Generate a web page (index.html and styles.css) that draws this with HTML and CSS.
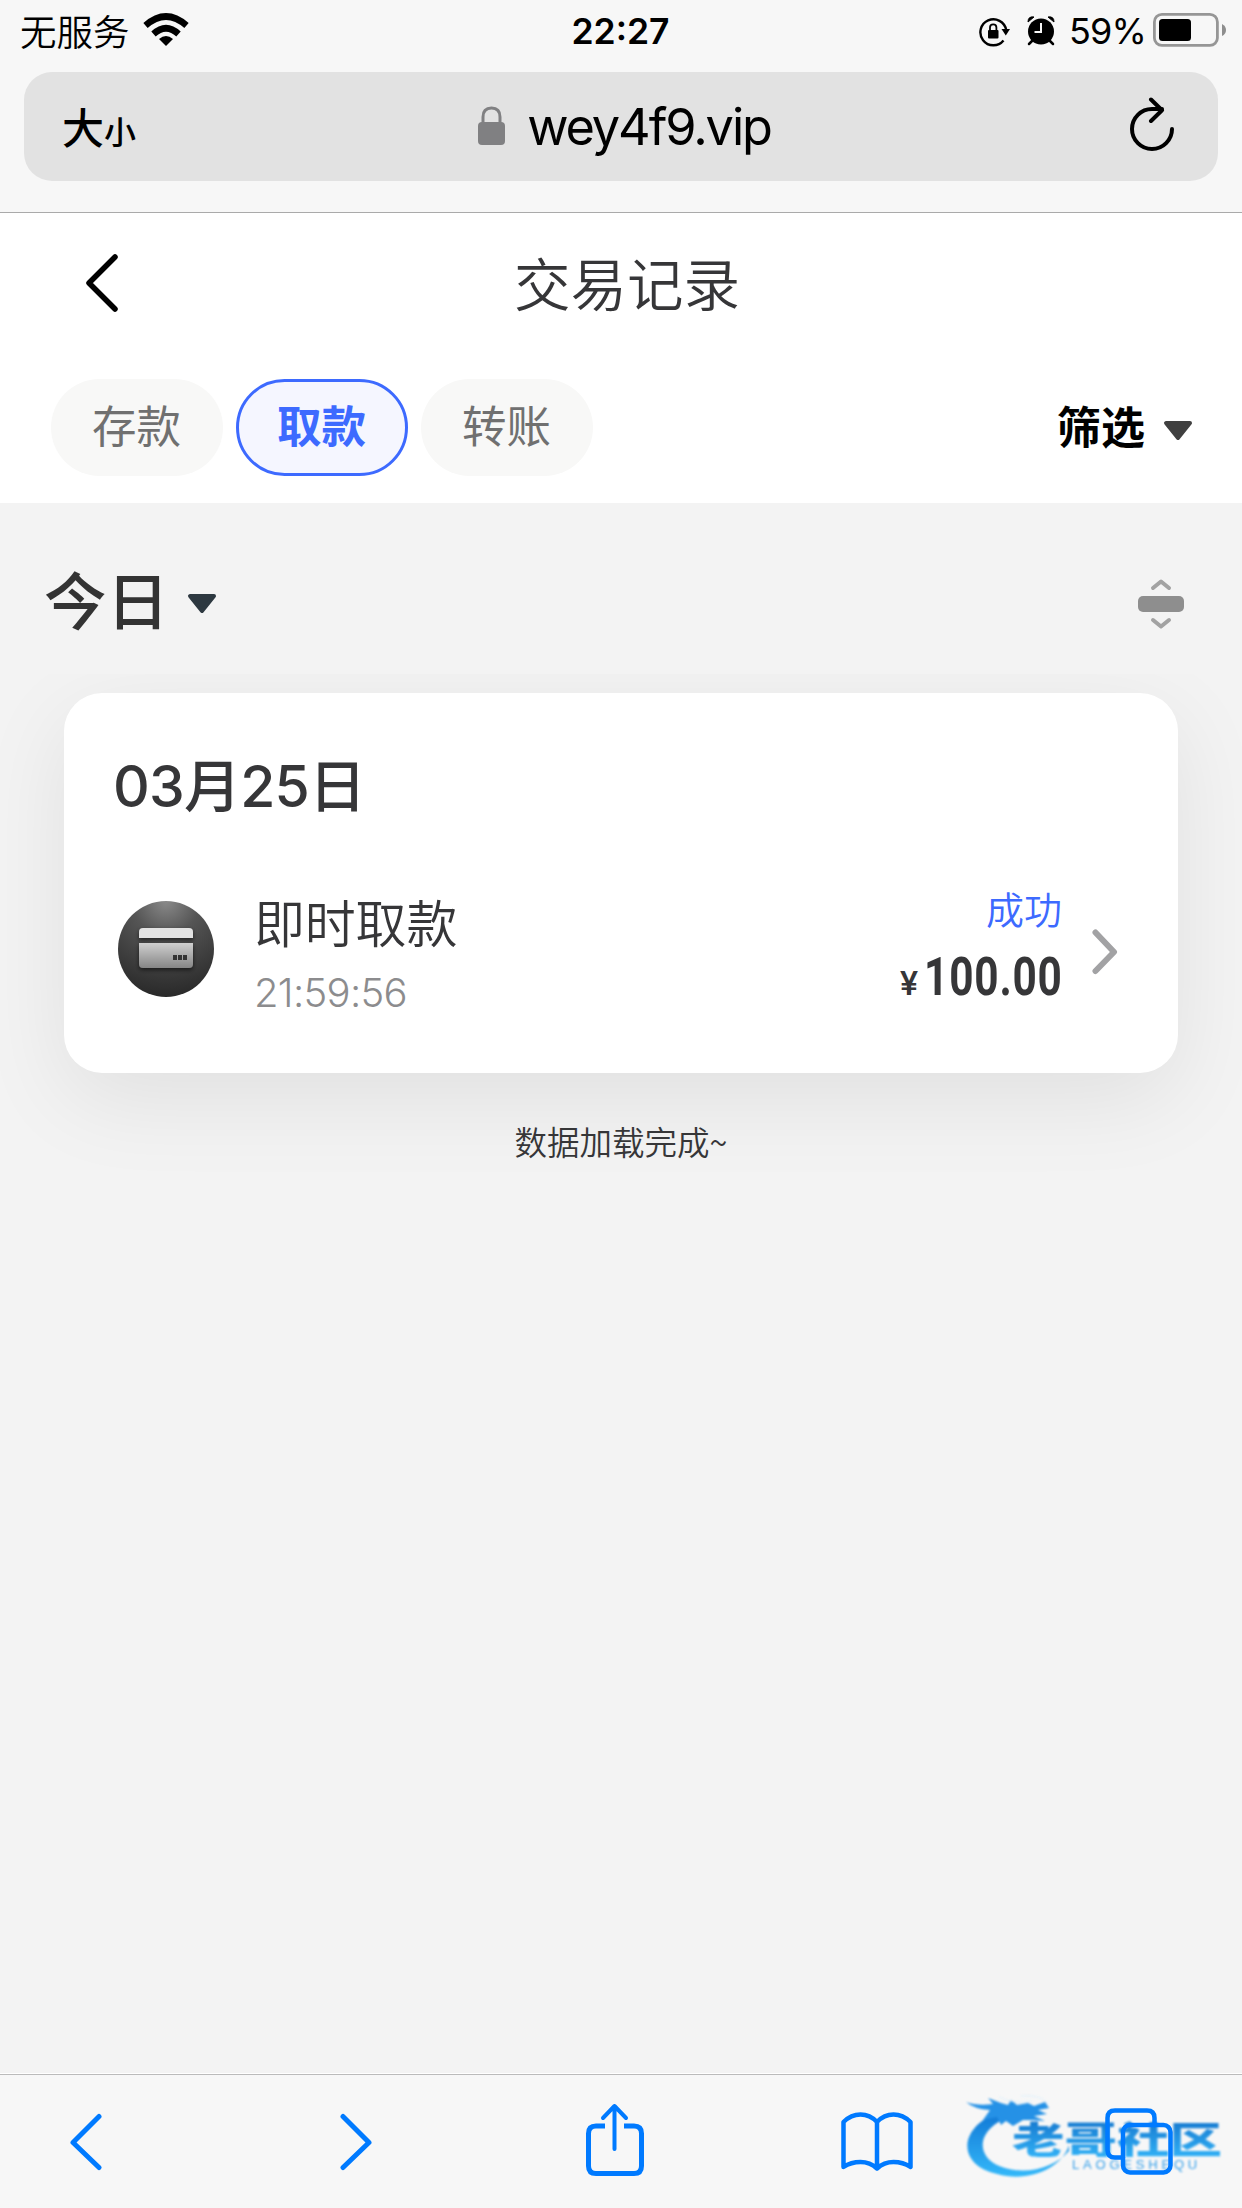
FILE: index.html
```html
<!DOCTYPE html>
<html lang="zh-CN">
<head>
<meta charset="utf-8">
<title>交易记录</title>
<link rel="stylesheet" href="styles.css">
</head>
<body>
<div class="browser-top">
  <div class="status">
    <div class="status-left">
      <span class="carrier">无服务</span>
      <svg class="wifi" width="46" height="34" viewBox="0 0 46 34"><path d="M2.500 12.500Q23-5.500 43.500 12.500" fill="none" stroke="#000" stroke-width="6.500"/><path d="M10.500 21Q23 9.500 35.500 21" fill="none" stroke="#000" stroke-width="6.500"/><path d="M16 26Q23 20 30 26L23 33Z"/></svg>
    </div>
    <span class="clock">22:27</span>
    <div class="status-right">
      <svg width="32" height="30" viewBox="0 0 32 30"><path d="M24.500 23.500A13 13 0 1 1 27.200 13" fill="none" stroke="#000" stroke-width="2.400"/><path d="M22.500 12H31L26.800 18.500Z"/><rect x="9" y="13" width="10.500" height="8.500" rx="1"/><path d="M11 14V10.500a3.200 3.200 0 0 1 6.400 0V14" fill="none" stroke="#000" stroke-width="1.800"/></svg>
      <svg class="alarm" width="28" height="30" viewBox="0 0 28 30"><circle cx="14" cy="15.500" r="13"/><path d="M1 6Q1 0 7 1ZM27 6Q27 0 21 1Z" stroke="#000"/><path d="M5 25L2 28M23 25l3 3" stroke="#000" stroke-width="2.500" stroke-linecap="round"/><path d="M14 7v9H7.500" fill="none" stroke="#f7f7f7" stroke-width="2"/></svg>
      <span class="percent">59%</span>
      <svg width="74" height="34" viewBox="0 0 74 34"><rect x="1.400" y="1.400" width="63" height="31" rx="7.500" fill="none" stroke="#969696" stroke-width="2.800"/><rect x="6" y="6" width="32" height="22" rx="3.500"/><path d="M69 11q4 2 4 6t-4 6z" fill="#8e8e8e"/></svg>
    </div>
  </div>
  <div class="address">
    <div class="text-size"><span class="big">大</span><span class="small">小</span></div>
    <div class="url">
      <svg width="28" height="40" viewBox="0 0 28 40"><rect y="16" width="27" height="23" rx="4" fill="#808082"/><path d="M5 18V11Q5 2 13.500 2T22 11v7" fill="none" stroke="#808082" stroke-width="3"/></svg>
      <span>wey4f9.vip</span>
    </div>
    <svg class="reload" width="46" height="56" viewBox="0 0 46 56" fill="none" stroke="#000" stroke-width="4" stroke-linecap="round" stroke-linejoin="round"><path d="M42 32A20 20 0 1 1 22 12H32"/><path d="M21 2.500L32 13.200 21 24"/></svg>
  </div>
</div>
<header class="head">
  <div class="title-row">
    <svg class="back" width="34" height="60" viewBox="0 0 34 60"><path d="M30 5L4 31 30 57" fill="none" stroke="#000" stroke-width="5.500" stroke-linecap="round" stroke-linejoin="round"/></svg>
    <h1 class="title">交易记录</h1>
  </div>
  <div class="filters">
    <div class="tabs"><button class="tab">存款</button><button class="tab active">取款</button><button class="tab">转账</button></div>
    <div class="filter"><span>筛选</span><svg width="30" height="20" viewBox="0 0 30 20"><path d="M3 2H27L15 17Z" fill="#404040" stroke="#404040" stroke-width="4" stroke-linejoin="round"/></svg></div>
  </div>
</header>
<main class="content">
  <div class="day-row">
    <div class="day"><span>今日</span><svg width="30" height="20" viewBox="0 0 30 20"><path d="M3 2H27L15 17Z" fill="#2d3840" stroke="#2d3840" stroke-width="4" stroke-linejoin="round"/></svg></div>
    <svg width="46" height="52" viewBox="0 0 46 52"><rect y="18" width="46" height="16" rx="5" fill="#8e8e8e"/><path d="M15 10l8-6.500L31 10M15 42l8 6.500L31 42" fill="none" stroke="#a2a2a2" stroke-width="4" stroke-linecap="round" stroke-linejoin="round"/></svg>
  </div>
  <div class="list">
    <section class="card">
      <h2 class="date">03月25日</h2>
      <div class="record">
        <svg class="record-icon" width="96" height="96" viewBox="0 0 96 96">
          <defs>
            <radialGradient id="disc" cx=".5" cy="0" r="1"><stop offset="0" stop-color="#8a8a8a"/><stop offset=".35" stop-color="#555"/><stop offset="1" stop-color="#292929"/></radialGradient>
            <linearGradient id="bank" x1="0" y1="0" x2="0" y2="1"><stop offset="0" stop-color="#cfcfcf"/><stop offset="1" stop-color="#858585"/></linearGradient>
            <filter id="lift" x="-20%" y="-20%" width="140%" height="150%"><feDropShadow dx="0" dy="2" stdDeviation="2" flood-opacity=".6"/></filter>
          </defs>
          <circle cx="48" cy="48" r="48" fill="url(#disc)"/>
          <g filter="url(#lift)"><path d="M21 37V31q0-4 4-4H71q4 0 4 4v6Z" fill="#e2e2e2"/><path d="M21 42H75V63q0 4-4 4H25q-4 0-4-4Z" fill="url(#bank)"/></g>
          <path d="M55 54h4v5h-4zM60 54h4v5h-4zM65 54h4v5h-4z" fill="#333"/>
        </svg>
        <div class="info"><div class="name">即时取款</div><div class="time">21:59:56</div></div>
        <div class="result"><div class="state">成功</div><div class="amount"><span class="yen">¥</span><span class="sum">100.00</span></div></div>
        <svg class="more" width="26" height="46" viewBox="0 0 26 46"><path d="M3.500 3.500L22 23 3.500 42" fill="none" stroke="#a2a2a4" stroke-width="6" stroke-linecap="round" stroke-linejoin="round"/></svg>
      </div>
    </section>
    <p class="done">数据加载完成~</p>
  </div>
</main>
<nav class="toolbar">
  <svg width="34" height="58" viewBox="0 0 34 58"><path d="M30 3.500L4 29.500 30 54.500" /></svg>
  <svg class="forward" width="34" height="58" viewBox="0 0 34 58"><path d="M4 3.500L30 29.500 4 54.500"/></svg>
  <svg class="share" width="58" height="74" viewBox="0 0 58 74"><path d="M19 23H10q-7.500 0-7.500 7.500V63q0 7.500 7.500 7.500H48q7.500 0 7.500-7.500V30.500Q55.500 23 48 23H38" stroke-linecap="butt"/><path d="M28.500 46V3M17 15L28.500 3 40 15" stroke-width="4"/></svg>
  <svg class="book" width="72" height="60" viewBox="0 0 72 60"><path d="M36 10Q29 2.500 19.500 2.500T2.500 10V55Q10 50 19.500 50T36 56.500Q43 50 52.500 50T69.500 55V10Q62 2.500 52.500 2.500T36 10V56" stroke-width="4.500"/></svg>
  <svg class="windows" width="68" height="68" viewBox="0 0 68 68"><path d="M49.500 17V10q0-7.500-7.500-7.500H10Q2.500 2.500 2.500 10V42q0 7.500 7.500 7.500h8" stroke-width="4.500"/><rect x="18" y="17" width="47.500" height="47.500" rx="7" stroke-width="4.500"/></svg>
  <div class="brand">
    <svg width="110" height="94" viewBox="0 0 110 94"><defs><linearGradient id="sea" x1="0" y1="0" x2="0" y2="1"><stop offset=".1" stop-color="#0878d8"/><stop offset="1" stop-color="#28b5fa"/></linearGradient></defs><path d="M31 18C-8 33-9 70 31 79C63 88 96 73 103 50V56C89 72 63 80 39 73C12 66 7 39 38 24Z" fill="url(#sea)"/><path d="M0 7Q11 11 27 9L22 3L35 8L42 10L45 5L51 10L62 8L68 11L79 7L83 13L72 15L81 19L68 21L79 26L66 25L57 25L47 31L40 26L35 30L31 22L17 25L24 15Q8 14 0 7Z" fill="#188be5"/><path d="M33 2Q50 10 66 6M55 1Q75-1 82 9" fill="none" stroke="#dceffb" stroke-width="1"/></svg>
    <span class="brand-name">老哥社区</span><span class="brand-latin">LAOGESHEQU</span>
  </div>
</nav>
</body>
</html>
```
FILE: styles.css
```css
* { box-sizing: border-box; }
body { margin: 0; width: 1242px; height: 2208px; display: flex; flex-direction: column; background: #f3f3f3; color: #363638; font-family: Inter, "Noto Sans CJK SC", sans-serif; overflow: hidden; }
svg { display: block; flex: none; }
span { white-space: nowrap; }
.browser-top { height: 213px; flex: none; background: #f7f7f7; border-bottom: 1px solid #aaa; color: #000; }
.status { height: 72px; display: grid; grid-template-columns: 1fr auto 1fr; padding: 0 15px 0 20px; }
.status-left, .status-right { display: flex; padding-top: 13px; }
.carrier { width: 123px; font-size: 36.500px; line-height: 35px; font-weight: 350; font-family: "Noto Sans CJK SC", sans-serif; }
.clock { margin: 0 3px 0 -3px; padding-top: 14px; font-size: 35.500px; line-height: 36px; font-weight: 600; }
.status-right { justify-content: flex-end; }
.status-right > svg:first-child { margin-top: 4px; }
.alarm { margin: 3px 14px 0 16px; }
.percent { width: 84px; font-size: 36px; line-height: 37px; letter-spacing: -.9px; }
.address { height: 109px; margin: 0 24px; padding: 0 42px 0 38px; border-radius: 28px; background: #e2e2e2; display: grid; grid-template-columns: 200px 1fr 200px; align-items: center; }
.text-size { display: flex; align-items: baseline; margin-top: -3px; font-weight: 500; font-family: "Noto Sans CJK SC", sans-serif; }
.big { font-size: 42px; }
.small { font-size: 32px; }
.url { display: flex; justify-content: center; align-items: center; gap: 21px; padding: 1px 0 0 11px; font-size: 50.500px; line-height: 60px; letter-spacing: -2.100px; }
.url svg { margin-bottom: 2px; }
.reload { justify-self: end; margin-bottom: 3px; }
.head { height: 290px; flex: none; background: #fff; }
.title-row { height: 166px; display: grid; grid-template-columns: 200px 1fr 188px; padding-top: 39px; }
.back { margin-left: 85px; }
.title { margin: 0; text-align: center; font-size: 56.500px; line-height: 67px; font-weight: 350; }
.filters { display: flex; justify-content: space-between; align-items: center; padding: 0 49px 0 51px; }
.tabs { display: flex; gap: 13px; }
.tab { width: 172px; height: 97px; padding: 0 1px 7px 0; border: 0; border-radius: 49px; background: #f8f8f7; color: #707070; font: 400 44.500px/60px "Noto Sans CJK SC", sans-serif; }
.active { border: 3px solid #3d6aff; background: #f5f6ff; color: #3d6aff; font-weight: 700; }
.filter { display: flex; align-items: center; gap: 18px; color: #000; font-size: 44px; line-height: 60px; font-weight: 700; }
.filter svg { margin-top: 6px; }
.content { flex: 1; min-height: 0; }
.day-row { height: 171px; padding: 31px 58px 0 44px; display: flex; align-items: center; justify-content: space-between; }
.day { display: flex; align-items: center; gap: 18px; font-size: 62.500px; line-height: 78px; font-weight: 500; color: #333; }
.day span { margin-top: -4px; }
.list { overflow: hidden; padding: 19px 64px 80px; }
.card { height: 380px; padding: 56px 60px 0 49px; border-radius: 38px; background: #fff; box-shadow: 0 26px 90px rgba(0,0,0,.08); }
.date { margin: 0; font-size: 57px; line-height: 76px; font-weight: 500; letter-spacing: -.8px; }
.record { display: flex; height: 130px; margin-top: 60px; }
.record-icon { margin: 16px 0 0 5px; }
.info { margin-left: 40px; flex: 1; }
.name { font-size: 51px; line-height: 79px; letter-spacing: -.2px; font-weight: 350; }
.time { font-size: 40px; line-height: 50px; margin-top: 4px; color: #8c8c8e; font-weight: 350; letter-spacing: -.700px; }
.result { width: 180px; display: flex; flex-direction: column; align-items: flex-end; }
.state { color: #3d6aff; font-size: 38px; line-height: 50px; font-weight: 350; }
.amount { display: flex; align-items: baseline; height: 60px; margin-top: 12px; font-family: Roboto, sans-serif; font-weight: 700; line-height: 60px; }
.yen { font-size: 34px; font-weight: 500; margin-right: 6px; }
.sum { width: 138px; font-size: 53px; letter-spacing: 1px; transform: scaleX(.8); transform-origin: left; }
.more { margin: 44px 0 0 30px; }
.done { margin: 43px 0 0; text-align: center; font-size: 32.500px; line-height: 50px; font-weight: 350; font-family: "Noto Sans CJK SC", sans-serif; }
.toolbar { position: relative; height: 134px; flex: none; background: #f7f7f7; border-top: 1px solid #bbb; display: flex; align-items: center; padding: 0 69px 0 69px; box-shadow: 0 -1px #fff; }
.toolbar > svg { fill: none; stroke: #007aff; stroke-width: 5; stroke-linecap: round; stroke-linejoin: round; z-index: 1; }
.forward { margin-left: 236px; }
.share { margin: 0 0 3px 213px; }
.book { margin-left: 197px; }
.windows { margin-left: 192px; }
.brand { position: absolute; left: 966px; top: 20px; display: grid; opacity: .94; filter: blur(.9px); }
.brand svg, .brand span { grid-area: 1 / 1; }
.brand-name { margin: 24px 0 0 46px; width: 148px; height: 38px; font: 900 37px/38px "Noto Sans CJK SC", sans-serif; background: linear-gradient(#0870cc, #26adf6); background-clip: text; color: transparent; transform: scaleX(1.420); transform-origin: left; }
.brand-latin { margin: 62px 0 0 106px; font: 400 13px/15px "Liberation Sans", sans-serif; color: #2b9be8; letter-spacing: 3.800px; }
```
